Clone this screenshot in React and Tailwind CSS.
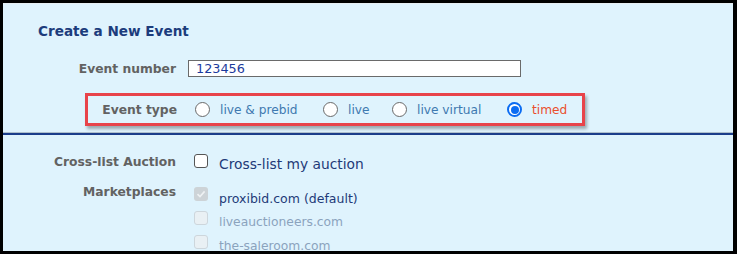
import React from "react";

const font = { fontFamily: '"DejaVu Sans", Verdana, sans-serif' };

function Radio({ checked }) {
  if (checked) {
    return (
      <span className="flex h-[15px] w-[15px] shrink-0 items-center justify-center rounded-full border-[2px] border-[#0b6cf2] bg-white">
        <span className="h-[8px] w-[8px] rounded-full bg-[#0b6cf2]" />
      </span>
    );
  }
  return <span className="h-[15px] w-[15px] shrink-0 rounded-full border-[1.3px] border-[#6a6a6a] bg-white" />;
}

function Option({ w, label, checked, color }) {
  return (
    <div className={`flex shrink-0 items-center ${w}`}>
      <Radio checked={checked} />
      <span className={`ml-[10px] whitespace-nowrap text-[12.2px] leading-[16px] ${color}`}>{label}</span>
    </div>
  );
}

function Check({ kind }) {
  if (kind === "on") {
    return <span className="block h-[14px] w-[14px] shrink-0 rounded-[3px] border-[1.5px] border-[#555] bg-white" />;
  }
  if (kind === "disabledChecked") {
    return (
      <span className="flex h-[14px] w-[14px] shrink-0 items-center justify-center rounded-[3px] bg-[#cdd3d7]">
        <svg width="10" height="10" viewBox="0 0 10 10">
          <path d="M1.5 5.2 L4 7.6 L8.6 2.4" fill="none" stroke="#eef1f3" strokeWidth="1.6" />
        </svg>
      </span>
    );
  }
  return <span className="block h-[14px] w-[14px] shrink-0 rounded-[3px] border border-[#cdd6dc] bg-[#e9f0f4]" />;
}

export default function App() {
  return (
    <div className="h-[254px] w-[737px] overflow-hidden bg-black pb-[3px] pl-[3px] pr-[4px] pt-[3px]" style={font}>
      <div className="h-full w-full overflow-hidden border-t border-[#e6eef2] bg-[#dff3fd]">
        <div className="ml-[35px] pt-[19px] text-[13.6px] font-bold leading-[16px] text-[#1c3c7c]">Create a New Event</div>

        <div className="mt-[21px] flex items-center">
          <div className="w-[173px] shrink-0 text-right text-[12.3px] font-bold leading-[16px] text-[#626262]">Event number</div>
          <div className="ml-[12px] flex h-[17px] w-[333px] shrink-0 items-center border border-[#6a6a6a] bg-white pl-[7px] text-[12.8px] leading-[15px] text-[#1b3a9c]">
            123456
          </div>
        </div>

        <div className="ml-[82px] mt-[16px] flex h-[33px] w-[500px] items-center border-[3px] border-[#e8434a] shadow-[2px_3px_3px_rgba(0,0,0,0.3)]">
          <div className="w-[89px] shrink-0 text-right text-[12.3px] font-bold leading-[16px] text-[#626262]">Event type</div>
          <div className="ml-[18px] flex items-center">
            <Option w="w-[128px]" label="live & prebid" color="text-[#3e79b0]" />
            <Option w="w-[69px]" label="live" color="text-[#3e79b0]" />
            <Option w="w-[115px]" label="live virtual" color="text-[#3e79b0]" />
            <Option w="w-[70px]" label="timed" checked color="text-[#ea4f2c]" />
          </div>
        </div>

        <div className="mt-[6px] h-[1px] w-full bg-[#aebfcc]" />
        <div className="h-[2px] w-full bg-[#1b3d8a]" />

        <div className="mt-[19px] flex items-start">
          <div className="w-[173px] shrink-0 text-right text-[12.3px] font-bold leading-[16px] text-[#626262]">Cross-list Auction</div>
          <div className="ml-[18px]">
            <Check kind="on" />
          </div>
          <div className="ml-[11px] mt-[1px] whitespace-nowrap text-[13.8px] leading-[18px] text-[#1e3a78]">Cross-list my auction</div>
        </div>

        <div className="mt-[11px] flex items-start">
          <div className="w-[173px] shrink-0 text-right text-[12.3px] font-bold leading-[16px] text-[#626262]">Marketplaces</div>
          <div className="ml-[18px] mt-[3px] flex flex-col">
            <div className="flex h-[24px] shrink-0 items-start">
              <Check kind="disabledChecked" />
              <span className="ml-[11px] mt-[4px] whitespace-nowrap text-[12.5px] leading-[16px] text-[#1e3a78]">proxibid.com (default)</span>
            </div>
            <div className="flex h-[24px] shrink-0 items-start">
              <Check kind="disabled" />
              <span className="ml-[11px] mt-[3px] whitespace-nowrap text-[12.3px] leading-[16px] text-[#8ba3bd]">liveauctioneers.com</span>
            </div>
            <div className="flex h-[24px] shrink-0 items-start">
              <Check kind="disabled" />
              <span className="ml-[11px] mt-[3px] whitespace-nowrap text-[12.3px] leading-[16px] text-[#8ba3bd]">the-saleroom.com</span>
            </div>
          </div>
        </div>
      </div>
    </div>
  );
}
